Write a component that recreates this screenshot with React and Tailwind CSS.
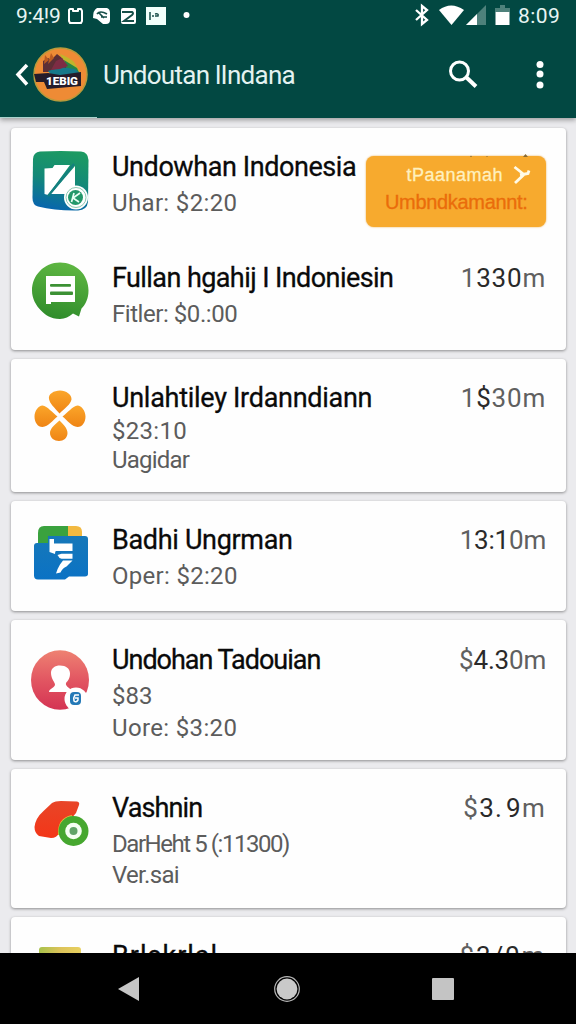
import React from 'react';

const TealFolderIcon = () => (
  <svg viewBox="30 151 62 64" className="w-[62px] h-16 shrink-0">
    <defs>
      <linearGradient id="teal" x1="0.6" y1="0" x2="0.4" y2="1">
        <stop offset="0" stopColor="#1c9a62" />
        <stop offset="0.5" stopColor="#138878" />
        <stop offset="1" stopColor="#0865ae" />
      </linearGradient>
    </defs>
    <path d="M40 151.500Q61 150.500 81 151.500Q88 152 88.500 160L88 202Q87 210 78 210.500Q56 211 38 206.500Q32.500 205 32.500 198L33 159Q33.500 152 40 151.500Z" fill="url(#teal)" />
    <path d="M44.500 168.500l8-0.500 2-3H70L48 195l-3.500-1z" fill="#fff" />
    <path d="M75 166v23l-8 5H51z" fill="#fff" />
    <path d="M74 164L48 196" stroke="#14807f" strokeWidth="2.200" />
    <circle cx="76" cy="197.500" r="12" fill="#fff" />
    <circle cx="76" cy="197.500" r="10" fill="#fff" stroke="#8cc9b2" strokeWidth="1" />
    <circle cx="75.500" cy="197.500" r="7.500" fill="#23986b" />
    <path d="M74 193l-2.500 9M80 193l-7 5 6 4" stroke="#e8fff5" strokeWidth="1.700" fill="none" />
  </svg>
);

const ChatIcon = () => (
  <svg viewBox="30 262 62 64" className="w-[62px] h-16 shrink-0">
    <defs>
      <linearGradient id="leaf" x1="0.6" y1="0" x2="0.4" y2="1">
        <stop offset="0" stopColor="#5fb742" />
        <stop offset="1" stopColor="#2f8c2b" />
      </linearGradient>
    </defs>
    <path d="M60 262.500c16 0 28.500 12 28.500 28 0 8-3 14-7 18l-2.500 8-6-3c-4 3-8 5.500-13 5.500-10 0-15-4.500-19-8.500-5-5-9-12-9-20 0-15 12-28 28-28z" fill="url(#leaf)" />
    <path d="M46 276h29v26H51v2h-5z" fill="#fff" />
    <rect x="50" y="284" width="21" height="2.800" rx="1" fill="#3c9134" />
    <rect x="50" y="291.500" width="23" height="3.500" rx="1" fill="#3c9134" />
  </svg>
);

const CloverIcon = () => (
  <svg viewBox="30 382 62 64" className="w-[62px] h-16 shrink-0">
    <defs>
      <linearGradient id="orange" x1="0" y1="0" x2="0" y2="1">
        <stop offset="0" stopColor="#fba62a" />
        <stop offset="1" stopColor="#ef8414" />
      </linearGradient>
    </defs>
    <g fill="url(#orange)">
      <path d="M59.500 413.500C54 407 50 404 49 399c-1-5 5-8.500 11-8.500s12 4 11.500 9c-1 5-6.500 8.500-12 14z" />
      <path d="M57.500 416.500c-5 4-9 10-15 10.500-5 0-8-5-8-10.500s4-11 8-11c5 1 10 7 15 11z" />
      <path d="M62.500 416.500c5 4 9 10 15 10.500 5 0 8-5 8-10.500s-4-11-8-11c-5 1-10 7-15 11z" />
      <path d="M59.500 420.500c4 4 8 8 8 12.500 0 5-4 8-8.500 8s-9-3-9-8c0-4.500 5-8.500 9.500-12.500z" />
    </g>
  </svg>
);

const BlueFolderIcon = () => (
  <svg viewBox="30 525 62 64" className="w-[62px] h-16 shrink-0">
    <defs>
      <linearGradient id="blue" x1="0" y1="0" x2="0" y2="1">
        <stop offset="0" stopColor="#1678b9" />
        <stop offset="1" stopColor="#0b72c4" />
      </linearGradient>
    </defs>
    <path d="M38 548v-14q0-7 6-7h25v21z" fill="#3aa23e" />
    <path d="M68 527h8q6 0 6 6v6H68z" fill="#f2b940" />
    <path d="M37 544h11v-7h37q3 0 3 3v35q0 2-3 2.500H69l-4 3H38q-4 0-4-4V547q0-3 3-3z" fill="url(#blue)" />
    <path d="M49.500 540h4.500v4.500h18.500v7.500H56q-1 0-1 3l-5.500-2z" fill="#fff" />
    <path d="M57.500 556l4-1.200h11v5h-11q-2.500-0.500-4-3.800z" fill="#fff" />
    <path d="M63 561.500h9.500l-6 6q-4 1.500-6 6l-4.500 1q1.500-5 4-9z" fill="#fff" />
  </svg>
);

const PersonIcon = () => (
  <svg viewBox="30 645 62 64" className="w-[62px] h-16 shrink-0 overflow-visible">
    <defs>
      <linearGradient id="rose" x1="0" y1="0" x2="0" y2="1">
        <stop offset="0" stopColor="#ee8272" />
        <stop offset="0.5" stopColor="#e25662" />
        <stop offset="1" stopColor="#d43353" />
      </linearGradient>
    </defs>
    <ellipse cx="60" cy="681" rx="29" ry="29.800" fill="url(#rose)" />
    <path d="M51 674c0-5 4-7.500 9-7.500 6 0 10 3 10 8 0 5-2 7-4 9.500-1 3 4 6 10 9H49c0-3 5-4 6-7 0-3-4-6-4-12z" fill="#fff" />
    <circle cx="76" cy="700" r="11.500" fill="#fff" />
    <rect x="70" y="693" width="11" height="13" rx="4" fill="#2479b7" />
    <path d="M79 696h-4q-2 3-1 6 2 2 4-1v-2h-3" stroke="#fff" strokeWidth="1.500" fill="none" />
  </svg>
);

const TomatoIcon = () => (
  <svg viewBox="30 793 62 64" className="w-[62px] h-16 shrink-0">
    <defs>
      <linearGradient id="tomato" x1="0" y1="0" x2="0" y2="1">
        <stop offset="0" stopColor="#e84528" />
        <stop offset="1" stopColor="#f33618" />
      </linearGradient>
    </defs>
    <path d="M52 804q3-2 9-2l16 0.500q3 0.500 2 3.500l-3 8-17 20q-2 5-8 5l-12-2q-4.500-3-4.500-9 1-9 9-16z" fill="url(#tomato)" />
    <path d="M59 836q-1-16 13-19" stroke="#e8bf3c" strokeWidth="2" fill="none" />
    <circle cx="73.500" cy="832" r="15" fill="#46a72f" />
    <circle cx="73.500" cy="832" r="8.300" fill="#f5fff2" />
    <circle cx="73.500" cy="832" r="4" fill="#61a467" />
  </svg>
);

const GoldIcon = () => (
  <svg viewBox="30 941 62 64" className="w-[62px] h-16 shrink-0">
    <defs>
      <linearGradient id="gold" x1="0" y1="0" x2="1" y2="0">
        <stop offset="0" stopColor="#a8c24c" />
        <stop offset="0.5" stopColor="#dcc35a" />
        <stop offset="1" stopColor="#e8d060" />
      </linearGradient>
    </defs>
    <rect x="39" y="948" width="42" height="40" rx="3" fill="url(#gold)" />
  </svg>
);

const cards = [
  {
    className: 'h-[222px] pt-[23px] gap-[43px]',
    rows: [
      {
        icon: TealFolderIcon,
        title: 'Undowhan Indonesia',
        titleClass: 'tracking-[-0.42px]',
        lines: [{ text: 'Uhar: $2:20', className: 'leading-8 tracking-[0.35px]' }],
      },
      {
        icon: ChatIcon,
        title: 'Fullan hgahij I Indoniesin',
        titleClass: 'tracking-[-0.58px]',
        lines: [{ text: 'Fitler: $0.:00', className: 'leading-8 tracking-[-0.45px]' }],
        amount: ['1', '330', 'm'],
        amountClass: 'tracking-[0.8px]',
      },
    ],
  },
  {
    className: 'h-[133px] pt-[23px]',
    rows: [
      {
        icon: CloverIcon,
        title: 'Unlahtiley Irdanndiann',
        titleClass: 'tracking-[-0.28px]',
        linesClass: 'pt-[3px]',
        lines: [
          { text: '$23:10', className: 'leading-[29px] tracking-[0.3px]' },
          { text: 'Uagidar', className: 'leading-[29px] tracking-[-0.8px]' },
        ],
        amount: ['1', '$', '30m'],
        amountClass: 'tracking-[0.8px]',
      },
    ],
  },
  {
    className: 'h-[110px] pt-[23px]',
    rows: [
      {
        icon: BlueFolderIcon,
        title: 'Badhi Ungrman',
        titleClass: 'tracking-[-0.33px]',
        lines: [{ text: 'Oper: $2:20', className: 'leading-8 tracking-[0.3px]' }],
        amount: ['1', '3:1', '0m'],
        amountClass: 'tracking-[-0.2px]',
      },
    ],
  },
  {
    className: 'h-[140px] pt-6',
    rows: [
      {
        icon: PersonIcon,
        title: 'Undohan Tadouian',
        titleClass: 'tracking-[-1.02px]',
        lines: [
          { text: '$83', className: 'leading-8' },
          { text: 'Uore: $3:20', className: 'leading-8 tracking-[0.35px]' },
        ],
        amount: ['$', '4.3', '0m'],
        amountClass: 'tracking-[-0.2px]',
      },
    ],
  },
  {
    className: 'h-[139px] pt-[23px]',
    rows: [
      {
        icon: TomatoIcon,
        title: 'Vashnin',
        titleClass: 'tracking-[-0.9px]',
        linesClass: 'pt-[5px]',
        lines: [
          { text: 'DarHeht 5 (:11300)', className: 'leading-[31px] tracking-[-1.45px]' },
          { text: 'Ver.sai', className: 'leading-[31px] tracking-[-0.7px]' },
        ],
        amount: ['$', '3. 9', 'm'],
        amountClass: 'tracking-[1.3px] [word-spacing:-5px]',
      },
    ],
  },
  {
    className: 'h-[139px] pt-[23px]',
    rows: [
      {
        icon: GoldIcon,
        title: 'Brlskrlal',
        titleClass: 'tracking-[1px]',
        lines: [],
        amount: ['$', '3/0', 'm'],
        amountClass: 'tracking-[1.8px]',
      },
    ],
  },
];

const Row = ({ row }) => {
  const Icon = row.icon;
  return (
    <div className="flex items-start pl-[19px] pr-[21px]">
      <Icon />
      <div className="ml-5 flex-1 whitespace-nowrap">
        <h2 className={`text-[27px] leading-8 text-[#0a0a0a] [-webkit-text-stroke:0.3px_#0a0a0a] ${row.titleClass}`}>{row.title}</h2>
        <div className={row.linesClass || 'pt-1'}>
          {row.lines.map(line => (
            <p key={line.text} className={`text-[24px] text-[#5c5c5c] ${line.className}`}>{line.text}</p>
          ))}
        </div>
      </div>
      {row.amount && (
        <div className={`text-[26px] leading-8 text-[#606060] -mr-px whitespace-nowrap ${row.amountClass}`}>
          {row.amount[0]}
          <span className="text-[#2a2a2a]">{row.amount[1]}</span>
          {row.amount[2]}
        </div>
      )}
    </div>
  );
};

const StatusBar = () => (
  <div className="flex h-8 items-center justify-between pl-4 pr-[15px] text-[#e8f5f3]">
    <div className="flex items-center">
      <span className="w-[43px] text-[21px] leading-8 tracking-[-0.3px]">9:4!9</span>
      <svg viewBox="64 0 130 32" className="ml-[5px] w-[130px] h-8">
        <path d="M70 9h3v2h5V9h3l1 2v10l-1 2H70l-1-2V10z" fill="none" stroke="#fff" strokeWidth="2" strokeLinejoin="round" />
        <path d="M97 8h10q3 1 3 5v7q0 4-4 4h-3l-6-5-4-1q0-8 4-10z" fill="#fff" />
        <path d="M97 14q3-4 10 0M99 13l5 5M101 17h6" stroke="#174f49" strokeWidth="1.700" fill="none" />
        <rect x="121" y="8" width="15" height="16" rx="2" fill="#fff" />
        <path d="M122 12h10q2 1 0 3l-8 6h10" stroke="#174f49" strokeWidth="2" fill="none" />
        <rect x="146" y="7" width="20" height="18" fill="#f1fffb" />
        <path d="M150 12v8M152 16h2M155 14q4-1 3 2h-3" stroke="#174f49" strokeWidth="1.500" fill="none" />
        <circle cx="186.500" cy="15" r="3" fill="#fff" />
      </svg>
    </div>
    <div className="flex items-center">
      <svg viewBox="412 0 98 32" className="w-[98px] h-8">
        <path d="M416 10l11 10-5 4V6l5 4-11 10" fill="none" stroke="#fff" strokeWidth="2.300" />
        <path d="M439 10q12-9 25 0l-12.500 15z" fill="#fff" />
        <path d="M486 5v20h-20z" fill="#4e817b" />
        <path d="M477 14v11h-11z" fill="#fff" />
        <path d="M495 8h5V5h5v3h5v4h-15z" fill="#4e817b" />
        <rect x="495.500" y="12" width="14" height="13" fill="#fff" />
      </svg>
      <span className="ml-2 w-[43px] text-[21px] leading-8 tracking-[0.4px]">8:09</span>
    </div>
  </div>
);

const Header = () => (
  <header className="relative h-[118px] shrink-0 bg-[#024842] shadow-[0_2px_5px_rgba(0,0,0,0.35)]">
    <StatusBar />
    <div className="flex h-[86px] items-center pl-3.5">
      <svg viewBox="14 32 76 86" className="w-[76px] h-[86px]">
        <path d="M27 65l-9 9.500 9 10" fill="none" stroke="#fff" strokeWidth="3.500" />
        <circle cx="60.500" cy="74.500" r="26.500" fill="#ee8b35" stroke="#b99b3b" strokeWidth="1.500" />
        <path d="M43 61l5-3 3 2 6-6 5 4 9 5-5 9H43z" fill="#5c2e36" />
        <path d="M45 55l4 5-5 4zM51 53l3 5-6 6z" fill="#bd5b20" />
        <path d="M60 54q10 4 14 8l7 12-14-7z" fill="#c0b52c" />
        <path d="M64 60l13 8 4 9-14-6z" fill="#278544" />
        <path d="M48 71l13-4 14 2 6 5-28 3z" fill="#16798a" />
        <path d="M56 61l6-3 6 8-8 3-9 1z" fill="#7d2c44" />
        <path d="M34 74l14-1 12 2 21-3v14l-34 3-3-7h-8z" fill="#241c2b" />
        <text x="46" y="84.500" fill="#fff" className="text-[10px] font-black [font-family:Roboto,sans-serif]" textLength="32" lengthAdjust="spacingAndGlyphs">1EBIG</text>
      </svg>
      <h1 className="ml-[13px] flex-1 whitespace-nowrap text-[26px] text-[#e4f3f1] tracking-[-0.72px]">Undoutan lIndana</h1>
      <svg viewBox="440 32 136 86" className="w-[136px] h-[86px]">
        <circle cx="459.500" cy="71" r="9" fill="none" stroke="#fff" strokeWidth="3" />
        <path d="M466 77l10 9.500" stroke="#fff" strokeWidth="4" />
        <circle cx="540" cy="64.500" r="3.500" fill="#fff" />
        <circle cx="540" cy="74" r="3.500" fill="#fff" />
        <circle cx="540" cy="85" r="3.500" fill="#fff" />
      </svg>
    </div>
    <div className="absolute bottom-0 left-0 h-px w-[97px] bg-[#a9d3cd]" />
  </header>
);

const Badge = () => (
  <div className="absolute left-[355px] top-7 h-[71px] w-[180px] rounded-lg bg-[#f7aa2e] shadow-[0_0_2px_#e9a845] [font-family:'Liberation_Sans',Roboto,sans-serif]">
    <svg viewBox="460 151 65 5" className="absolute -top-1 left-[97px] h-[5px] w-[65px]">
      <path d="M467 156l1-1.500 1 1.500zM483 156l1-1 1 1zM520 156l2.500-3 2.500 3z" fill="#8a6b35" />
    </svg>
    <div className="flex h-9 items-center justify-end pr-[15px] pt-0.5">
      <span className="text-[18px] leading-5 text-[#fff0be] tracking-[0.5px] [-webkit-text-stroke:0.3px_#fff0be]">tPaanamah</span>
      <svg viewBox="510 164 20 20" className="ml-2 h-5 w-5">
        <path d="M513.500 166l9.500 7.500-9 8.500M519 174l8-1.500 1-3" fill="none" stroke="#fffbe8" strokeWidth="2.800" />
      </svg>
    </div>
    <p className="whitespace-nowrap pl-[19px] text-[20px] leading-5 text-[#ea6c0b] tracking-[-0.32px] [-webkit-text-stroke:0.3px_#ea6c0b]">Umbndkamannt:</p>
  </div>
);

const NavBar = () => (
  <nav className="flex h-[71px] shrink-0 items-center justify-between bg-black pl-[117px] pr-[122px]">
    <svg viewBox="0 0 24 28" className="h-7 w-6">
      <path d="M1 14L22 2v24z" fill="#c6c6c6" />
    </svg>
    <svg viewBox="0 0 28 28" className="ml-px h-7 w-7">
      <circle cx="14" cy="14" r="12.300" fill="none" stroke="#b5b5b5" strokeWidth="1.200" />
      <circle cx="14" cy="14" r="10.400" fill="#c9c9c9" />
    </svg>
    <div className="h-[22px] w-[22px] rounded-[1px] bg-[#c4c4c4]" />
  </nav>
);

const App = () => {
  return (
    <div className="flex h-[1024px] w-[576px] flex-col overflow-hidden bg-[#ebebee] [font-family:Roboto,'Liberation_Sans',sans-serif]">
      <Header />
      <main className="flex min-h-0 flex-1 flex-col gap-[9px] overflow-hidden pl-[11px] pr-2.5 pt-2.5">
        {cards.map((card, i) => (
          <section
            key={i}
            className={`relative flex shrink-0 flex-col rounded-[4px] bg-[#fefefe] shadow-[0_1px_3px_rgba(0,0,0,0.4)] ${card.className}`}
          >
            {card.rows.map(row => (
              <Row key={row.title} row={row} />
            ))}
            {i === 0 && <Badge />}
          </section>
        ))}
      </main>
      <NavBar />
    </div>
  );
};

export default App;
